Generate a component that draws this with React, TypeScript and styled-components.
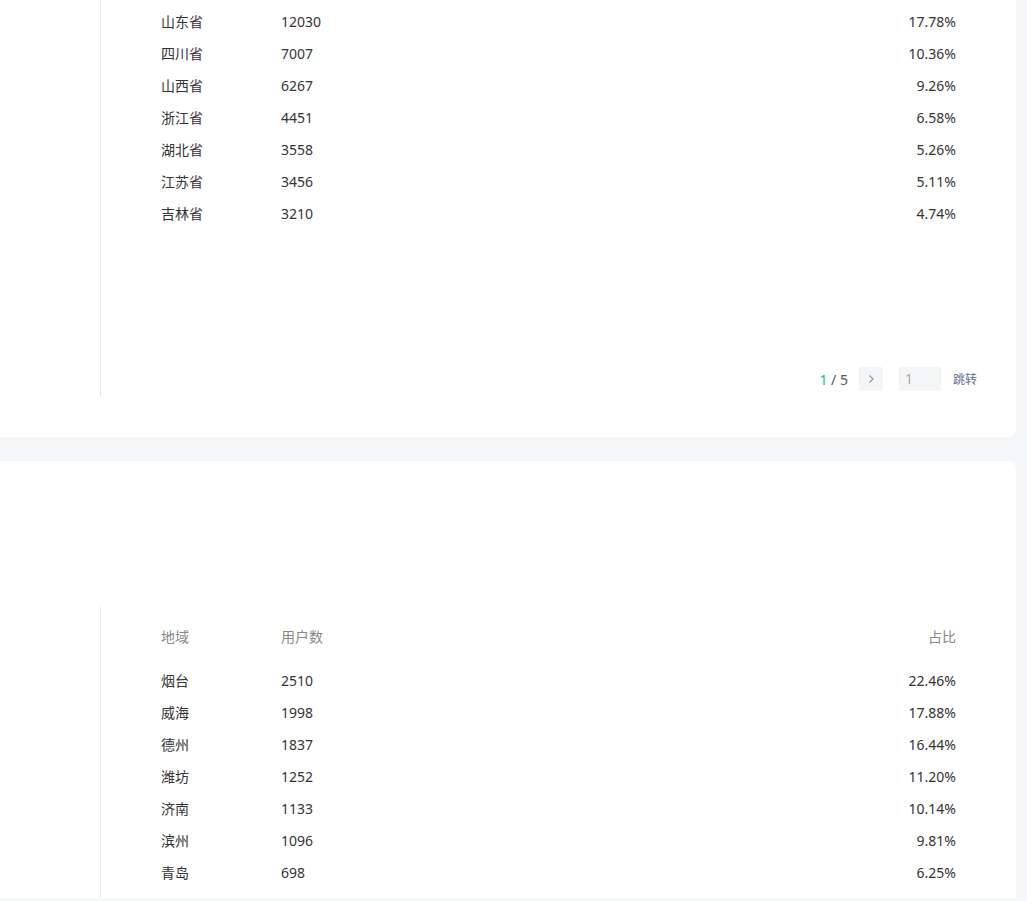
import React from 'react';
import styled, { createGlobalStyle } from 'styled-components';

const GlobalStyle = createGlobalStyle`
  html, body {
    margin: 0;
    padding: 0;
    background: #f5f6f8;
  }
  body {
    font-family: "Noto Sans", "Noto Sans CJK SC", sans-serif;
    font-size: 14px;
    color: #333;
  }
`;

const Page = styled.div`
  display: flex;
  flex-direction: column;
  gap: 24px;
  padding-right: 11px;
  padding-bottom: 3px;
`;

const Card = styled.section<{ $top: number; $bottom: number; $round: string }>`
  background: #fff;
  border-radius: ${(p) => p.$round};
  padding-top: ${(p) => p.$top}px;
  padding-bottom: ${(p) => p.$bottom}px;
  display: flex;
`;

const Side = styled.div`
  width: 100px;
  flex-shrink: 0;
`;

const Pane = styled.div<{ $height?: number; $top: number; $bottom: number }>`
  flex: 1;
  border-left: 1px solid #e6e6e6;
  padding: ${(p) => p.$top}px 0 ${(p) => p.$bottom}px 60px;
  display: flex;
  flex-direction: column;
  ${(p) => (p.$height ? `height: ${p.$height}px; box-sizing: border-box;` : '')}
`;

const Table = styled.div`
  padding-right: 60px;
  display: flex;
  flex-direction: column;
`;

const Row = styled.div<{ $head?: boolean }>`
  display: grid;
  grid-template-columns: 120px 1fr 120px;
  align-items: center;
  height: 32px;
  color: ${(p) => (p.$head ? '#888' : '#333')};
  margin-bottom: ${(p) => (p.$head ? 12 : 0)}px;
`;

const Cell = styled.span<{ $right?: boolean }>`
  text-align: ${(p) => (p.$right ? 'right' : 'left')};
`;

const Pager = styled.div`
  margin-top: auto;
  align-self: flex-end;
  margin-right: 39px;
  display: flex;
  align-items: center;
  height: 24px;
`;

const Count = styled.span`
  color: #555;
  margin-right: 11px;
  em {
    font-style: normal;
    color: #07c287;
  }
`;

const NextBtn = styled.button`
  width: 24px;
  height: 24px;
  border: none;
  border-radius: 2px;
  background: #f4f5f7;
  display: flex;
  align-items: center;
  justify-content: center;
  padding: 0;
  cursor: pointer;
`;

const JumpInput = styled.div`
  width: 42px;
  height: 24px;
  margin-left: 16px;
  border-radius: 2px;
  background: #f4f5f7;
  color: #aaa;
  box-sizing: border-box;
  padding-left: 6px;
  line-height: 24px;
`;

const Jump = styled.span`
  margin-left: 12px;
  color: #5c6e93;
  font-size: 12px;
  cursor: pointer;
`;

const provinces = [
  ['山东省', '12030', '17.78%'],
  ['四川省', '7007', '10.36%'],
  ['山西省', '6267', '9.26%'],
  ['浙江省', '4451', '6.58%'],
  ['湖北省', '3558', '5.26%'],
  ['江苏省', '3456', '5.11%'],
  ['吉林省', '3210', '4.74%'],
];

const cities = [
  ['烟台', '2510', '22.46%'],
  ['威海', '1998', '17.88%'],
  ['德州', '1837', '16.44%'],
  ['潍坊', '1252', '11.20%'],
  ['济南', '1133', '10.14%'],
  ['滨州', '1096', '9.81%'],
  ['青岛', '698', '6.25%'],
];

const App = () => {
  return (
    <>
      <GlobalStyle />
      <Page>
        <Card $top={0} $bottom={40} $round="0 0 8px 0">
          <Side />
          <Pane $height={397} $top={5} $bottom={6}>
            <Table>
              {provinces.map(([name, num, pct]) => (
                <Row key={name}>
                  <Cell>{name}</Cell>
                  <Cell>{num}</Cell>
                  <Cell $right>{pct}</Cell>
                </Row>
              ))}
            </Table>
            <Pager>
              <Count>
                <em>1</em> / 5
              </Count>
              <NextBtn>
                <svg width="10" height="10" viewBox="0 0 10 10">
                  <path d="M3.5 1.5 L7 5 L3.5 8.5" fill="none" stroke="#999" strokeWidth="1.2" />
                </svg>
              </NextBtn>
              <JumpInput>1</JumpInput>
              <Jump>跳转</Jump>
            </Pager>
          </Pane>
        </Card>
        <Card $top={146} $bottom={0} $round="0 8px 0 0">
          <Side />
          <Pane $top={13} $bottom={10}>
            <Table>
              <Row $head>
                <Cell>地域</Cell>
                <Cell>用户数</Cell>
                <Cell $right>占比</Cell>
              </Row>
              {cities.map(([name, num, pct]) => (
                <Row key={name}>
                  <Cell>{name}</Cell>
                  <Cell>{num}</Cell>
                  <Cell $right>{pct}</Cell>
                </Row>
              ))}
            </Table>
          </Pane>
        </Card>
      </Page>
    </>
  );
};

export default App;
